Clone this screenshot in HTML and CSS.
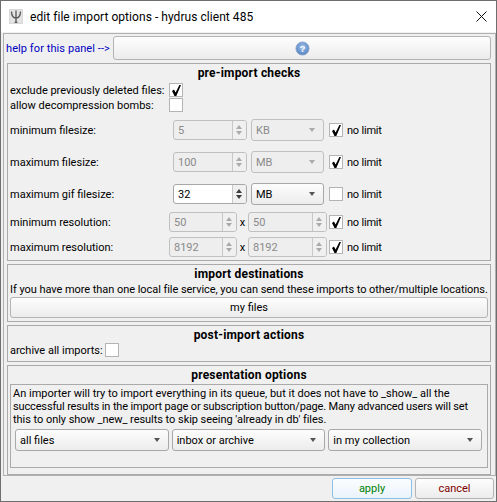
FILE: index.html
```html
<!DOCTYPE html>
<html lang="en">
<head>
<meta charset="utf-8">
<title>edit file import options - hydrus client 485</title>
<link rel="stylesheet" href="styles.css">
</head>
<body>
<div class="window">
  <header class="titlebar">
    <span class="app-icon"><svg width="12" height="13" viewBox="0 0 12 13"><path d="M6 .5V13M4.6 12.5h2.8M1.5 1.5c.1 4 1.2 6.4 4.5 6.6 3.3-.2 4.4-2.6 4.5-6.6" fill="none" stroke="#555" stroke-width="1.3"/></svg></span>
    <span class="title">edit file import options - hydrus client 485</span>
    <svg class="close" width="11" height="11" viewBox="0 0 11 11"><path d="M.5.5l10 10M10.5.5l-10 10" stroke="#111" stroke-width="1" fill="none"/></svg>
  </header>
  <main class="outer">
    <div class="help-row">
      <span class="help-link">help for this panel --&gt;</span>
      <button class="btn help-btn"><svg width="15" height="15" viewBox="0 0 16 16"><defs><radialGradient id="q" cx="50%" cy="40%" r="60%"><stop offset="0" stop-color="#a9c6ee"/><stop offset="1" stop-color="#4f7fc0"/></radialGradient></defs><circle cx="8" cy="8" r="7" fill="url(#q)" stroke="#8fa9cc"/><text x="8" y="11.5" class="q-mark">?</text></svg></button>
    </div>
    <section class="panel checks">
      <h2>pre-import checks</h2>
      <div class="row r-top"><span class="label lw1">exclude previously deleted files:</span><span class="check on"></span></div>
      <div class="row r-top2"><span class="label lw1">allow decompression bombs:</span><span class="check"></span></div>
      <div class="row r1">
        <span class="label cw">minimum filesize:</span>
        <span class="spin off w74"><span class="val">5</span><span class="arrows"></span></span>
        <span class="combo off"><span>KB</span></span>
        <span class="check on"></span><span class="nl">no limit</span>
      </div>
      <div class="row r2">
        <span class="label cw">maximum filesize:</span>
        <span class="spin off w74"><span class="val">100</span><span class="arrows"></span></span>
        <span class="combo off"><span>MB</span></span>
        <span class="check on"></span><span class="nl">no limit</span>
      </div>
      <div class="row r3">
        <span class="label cw">maximum gif filesize:</span>
        <span class="spin w74"><span class="val">32</span><span class="arrows"></span></span>
        <span class="combo"><span>MB</span></span>
        <span class="check"></span><span class="nl">no limit</span>
      </div>
      <div class="row r4">
        <span class="label cw2">minimum resolution:</span>
        <span class="spin off w68"><span class="val">50</span><span class="arrows"></span></span>
        <span class="x">x</span>
        <span class="spin off w79"><span class="val">50</span><span class="arrows"></span></span>
        <span class="check on"></span><span class="nl">no limit</span>
      </div>
      <div class="row r5">
        <span class="label cw2">maximum resolution:</span>
        <span class="spin off w68"><span class="val">8192</span><span class="arrows"></span></span>
        <span class="x">x</span>
        <span class="spin off w79"><span class="val">8192</span><span class="arrows"></span></span>
        <span class="check on"></span><span class="nl">no limit</span>
      </div>
    </section>
    <section class="panel dest">
      <h2>import destinations</h2>
      <p class="line">If you have more than one local file service, you can send these imports to other/multiple locations.</p>
      <button class="btn files-btn">my files</button>
    </section>
    <section class="panel post">
      <h2>post-import actions</h2>
      <div class="row r-post"><span class="label lw2">archive all imports:</span><span class="check"></span></div>
    </section>
    <section class="panel pres">
      <h2>presentation options</h2>
      <div class="inner">
        <p class="wrap">An importer will try to import everything in its queue, but it does not have to _show_ all the<br><span class="tight">successful results in the import page or subscription button/page. Many advanced users will set</span><br><span class="tight2">this to only show _new_ results to skip seeing 'already in db' files.</span></p>
        <div class="combos">
          <span class="combo big"><span>all files</span></span>
          <span class="combo big"><span>inbox or archive</span></span>
          <span class="combo big"><span>in my collection</span></span>
        </div>
      </div>
    </section>
  </main>
  <footer class="actions">
    <button class="btn apply">apply</button>
    <button class="btn cancel">cancel</button>
  </footer>
</div>
</body>
</html>
```
FILE: styles.css
```css
* { box-sizing: border-box; }
html, body { margin: 0; padding: 0; }
body {
  width: 497px; height: 502px; overflow: hidden;
  font: 11px/14px Roboto, "Liberation Sans", sans-serif;
  color: #000; background: #f0f0f0;
}
.window { height: 502px; display: flex; flex-direction: column; border: 1px solid #6e6e6e; background: #f0f0f0; }
.titlebar { height: 31px; background: #fff; display: flex; align-items: center; padding: 0 9px 0 8px; flex: none; }
.app-icon { width: 14px; height: 15px; background: #e4e4e4; border: 1px solid #d8d8d8; display: flex; align-items: center; justify-content: center; margin-right: 7px; }
.title { flex: 1; font-size: 12px; letter-spacing: .05px; }
.close { flex: none; }
.outer { margin: 1px 0 0 2px; padding: 2px 4px 0 2px; border: 1px solid #b0b0b0; height: 443px; flex: none; display: flex; flex-direction: column; gap: 3px; }
.help-row { height: 24px; display: flex; align-items: center; gap: 3px; flex: none; }
.help-link { color: #0000c0; white-space: nowrap; width: 104px; flex: none; letter-spacing: .08px; padding-top: 1px; }
.btn { font: inherit; color: #000; border: 1px solid #b4b4b4; border-radius: 3px; background: linear-gradient(#fdfdfd, #ececec); padding: 0; display: flex; align-items: center; justify-content: center; }
.help-btn { flex: 1; height: 24px; }
.q-mark { font: bold 10px "Liberation Sans", sans-serif; fill: #fff; text-anchor: middle; }
.panel { border: 1px solid #aaa; padding: 0 2px; margin-left: 1px; flex: none; }
.checks { height: 198px; }
.dest { height: 58px; }
.post { height: 37px; }
.pres { height: 110px; }
h2 { margin: 0; font-size: 12px; line-height: 14px; text-align: center; font-weight: 700; padding-top: 2px; letter-spacing: .2px; }
.row { display: flex; align-items: center; }
.r-top { height: 14px; margin-top: 3px; }
.r-top2 { height: 14px; margin-top: 1px; }
.r1 { height: 22px; margin-top: 7px; }
.r2 { height: 22px; margin-top: 10px; }
.r3 { height: 22px; margin-top: 10px; }
.r4 { height: 20px; margin-top: 7px; }
.r5 { height: 20px; margin-top: 5px; }
.r-post { height: 14px; margin-top: 1px; }
.label { white-space: nowrap; flex: none; padding-top: 2px; }
.lw1 { width: 159px; }
.lw2 { width: 95px; }
.cw { width: 163px; }
.cw2 { width: 159px; }
.check { width: 14px; height: 14px; flex: none; background: #fff; border: 1px solid #b4b4b4; position: relative; }
.check.on::after { content: ""; position: absolute; left: 2px; top: 1px; width: 9px; height: 11px; background: #000; clip-path: polygon(0 55%, 22% 42%, 40% 68%, 82% 0, 100% 0, 48% 100%, 28% 100%); }
.spin { height: 20px; display: flex; border: 1px solid #a8a8a8; border-radius: 3px; background: #fff; flex: none; }
.w74 { width: 74px; margin-right: 4px; }
.w68 { width: 68px; }
.w79 { width: 79px; margin-right: 2px; }
.val { flex: 1; padding-left: 4px; line-height: 20px; }
.arrows { width: 14px; border-left: 1px solid #c8c8c8; background: #f0f0f0; position: relative; border-radius: 0 2px 2px 0; }
.arrows::before, .arrows::after { content: ""; position: absolute; left: 3px; border: 3.5px solid transparent; }
.arrows::before { border-width: 0 3.5px 4px; border-bottom-color: #3c3c3c; top: 4px; }
.arrows::after { border-width: 4px 3.5px 0; border-top-color: #3c3c3c; bottom: 4px; }
.off .arrows::before { border-bottom-color: #aaa; }
.off .arrows::after { border-top-color: #aaa; }
.off.spin { background: #eee; color: #8a8a8a; border-color: #c0c0c0; }
.combo { width: 73px; height: 22px; flex: none; display: flex; align-items: center; padding: 1px 4px 0; border: 1px solid #a8a8a8; border-radius: 3px; background: linear-gradient(#fdfdfd, #ececec); position: relative; margin-right: 5px; }
.combo::after { content: ""; position: absolute; right: 8px; top: 8px; border: solid transparent; border-width: 4px 3.5px 0; border-top-color: #555; }
.combo.off { color: #8a8a8a; background: #eee; border-color: #c0c0c0; }
.combo.off::after { border-top-color: #aaa; }
.nl { margin-left: 4px; letter-spacing: -.2px; padding-top: 2px; }
.x { width: 11px; text-align: center; flex: none; padding-top: 2px; }
.line { margin: 2px 0 0; white-space: nowrap; line-height: 14px; letter-spacing: -.05px; }
.files-btn { width: 100%; height: 21px; margin-top: 0; padding-top: 1px; }
.inner { border: 1px solid #aaa; padding: 2px 5px 0 2px; height: 84px; margin-top: 2px; }
.wrap { margin: 0; line-height: 13px; white-space: nowrap; }
.tight { letter-spacing: -.146px; }
.tight2 { letter-spacing: -.04px; }
.combos { display: grid; grid-template-columns: repeat(3, 1fr); gap: 3px; margin: 3px 0 0 2px; }
.combo.big { width: auto; height: 22px; margin: 0; }
.actions { flex: 1; display: flex; justify-content: flex-end; gap: 3px; padding: 2px 2px 0 0; }
.apply { width: 80px; height: 21px; border-color: #8cc0e6; color: #008000; background: linear-gradient(#fafdff, #eaf3fb); }
.cancel { width: 79px; height: 21px; color: #800000; }
```
